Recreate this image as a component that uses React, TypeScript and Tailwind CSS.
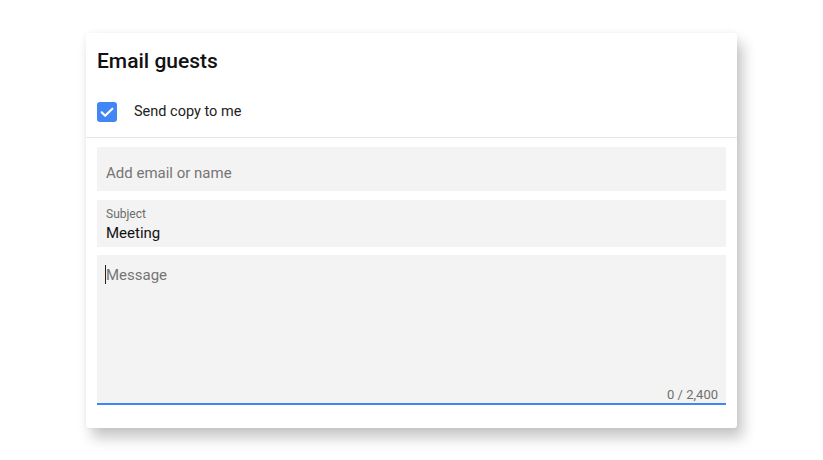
import React from "react";

export default function App() {
  return (
    <div className="w-[823px] h-[460px] bg-white overflow-hidden" style={{ fontFamily: "Roboto, 'Noto Sans', sans-serif" }}>
      <div className="ml-[86px] mt-[33px] w-[651px] h-[395px] bg-white rounded-[3px] shadow-[6px_10px_14px_rgba(0,0,0,0.22),0_0_6px_rgba(0,0,0,0.06)] flex flex-col">
        <div className="px-[11px] pt-[16px] pb-[15px] border-b border-[#e6e6e6]">
          <div className="h-[24px] leading-[24px] text-[21px] font-medium text-[#111]">Email guests</div>
          <div className="mt-[29px] h-[20px] flex items-center">
            <div className="w-[20px] h-[20px] rounded-[3px] bg-[#4285f4] flex items-center justify-center">
              <svg width="16" height="16" viewBox="0 0 24 24" fill="none">
                <path d="M4 12.5l5.2 5.2L20 7" stroke="white" strokeWidth="3.2" strokeLinecap="round" strokeLinejoin="round" />
              </svg>
            </div>
            <span className="ml-[17px] text-[14.5px] text-[#222]">Send copy to me</span>
          </div>
        </div>
        <div className="px-[11px] pt-[9px] flex flex-col gap-[9px]">
          <div className="h-[44px] bg-[#f3f3f3] px-[9px] pt-[17px] text-[15px] leading-[18px] text-[#757575]">
            Add email or name
          </div>
          <div className="h-[47px] bg-[#f3f3f3] flex flex-col px-[9px] pt-[7px]">
            <div className="text-[12px] leading-[15px] text-[#6b6b6b]">Subject</div>
            <div className="mt-[2px] text-[15px] leading-[19px] text-[#111]">Meeting</div>
          </div>
          <div className="-mt-[1px] h-[150px] bg-[#f3f3f3] border-b-2 border-[#4285f4] flex flex-col px-[9px] pt-[10px]">
            <div className="flex items-center text-[15px] leading-[18px] text-[#757575]">
              <span className="w-[1px] h-[19px] bg-[#222] -ml-[1px]" />
              Message
            </div>
            <div className="flex-1" />
            <div className="text-right text-[13px] leading-[16px] text-[#6f6f6f] -mr-[1px]">0 / 2,400</div>
          </div>
        </div>
      </div>
    </div>
  );
}
